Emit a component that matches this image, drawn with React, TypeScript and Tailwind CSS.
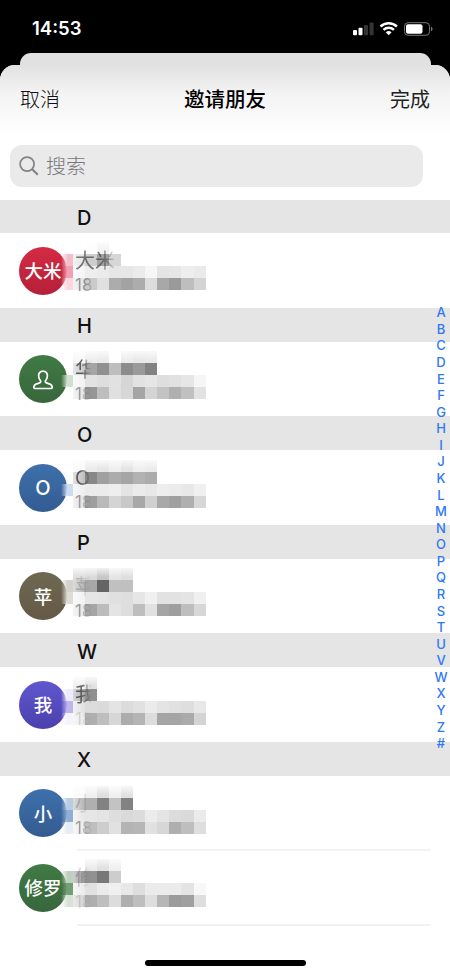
type Tone = number | string;

interface Contact {
  initials: string;
  name: string;
  color: string;
  top: string;
  nameMask: string;
  phoneMask: string;
  cells: Tone[][];
}

const _ = 0;

const fadeLong = "text-[#333333]/65 [mask-image:linear-gradient(to_right,black_24px,transparent_44px)]";
const fadeShort = "text-[#333333]/75 [mask-image:linear-gradient(to_right,black_6px,transparent_17px)]";
const fadeFaint = "text-[#333333]/25 [mask-image:linear-gradient(to_right,black_3px,transparent_16px)]";

const phoneClear = "text-[#777777]/75 [mask-image:linear-gradient(to_right,black_10px,transparent_22px)]";
const phoneShort = "text-[#777777]/70 [mask-image:linear-gradient(to_right,black_5px,transparent_18px)]";
const phoneFaint = "text-[#777777]/25 [mask-image:linear-gradient(to_right,black_5px,transparent_18px)]";

const red = "bg-linear-to-b from-[#d52b44] to-[#b51f38]";
const green = "bg-linear-to-b from-[#407b45] to-[#38663c]";
const blue = "bg-linear-to-b from-[#3e70ab] to-[#335c91]";
const brown = "bg-linear-to-b from-[#6e6852] to-[#655945]";
const violet = "bg-linear-to-b from-[#6057cf] to-[#4b40ad]";

const sections: { letter: string; contacts: Contact[] }[] = [
  {
    letter: "D",
    contacts: [
      {
        initials: "大米", name: "大米", color: red, top: "top-[8.6px]", nameMask: fadeLong, phoneMask: phoneClear,
        cells: [
          [_, _, 252, 242, _],
          ["245,190,205", 226, 206, 160, 214],
          ["242,160,180", 245, 238, 235, 230, 230, 235, 246, 228, 230, 238, 234],
          ["250,215,224", 228, 202, 224, 172, 163, 172, 220, 168, 154, 190, 212],
        ],
      },
    ],
  },
  {
    letter: "H",
    contacts: [
      {
        initials: "", name: "华", color: green, top: "top-[9.4px]", nameMask: fadeShort, phoneMask: phoneShort,
        cells: [
          [_, 248, 238, 235, _, 236, 232, 234],
          [_, 200, 165, 145, 190, 140, 154, 130],
          ["208,224,208", 242, 226, 222, 225, 214, 226, 230, 222, 225, 230, 246],
          [_, 228, 150, 190, 224, 215, 165, 212, 195, 176, 192, 226],
        ],
      },
    ],
  },
  {
    letter: "O",
    contacts: [
      {
        initials: "O", name: "O", color: blue, top: "top-[9.6px]", nameMask: fadeShort, phoneMask: phoneShort,
        cells: [
          [_, 250, 235, 230, 238, 228, 238, 235],
          [_, 190, 135, 160, 172, 165, 178, 172],
          ["205,220,240", 238, 235, 235, 238, 228, 235, 232, 238, 236, 232, 240],
          [_, 225, 158, 185, 212, 200, 168, 208, 168, 160, 175, 215],
        ],
      },
    ],
  },
  {
    letter: "P",
    contacts: [
      {
        initials: "苹", name: "苹", color: brown, top: "top-[9.7px]", nameMask: fadeFaint, phoneMask: phoneShort,
        cells: [
          [_, 222, 218, 198, 228, 222],
          ["212,210,204", 180, 168, 100, 192, 192],
          ["222,220,212", 242, 230, 228, 224, 222, 230, 240, 226, 226, 228, 240],
          [_, 230, 165, 188, 228, 222, 190, 225, 165, 158, 190, 215],
        ],
      },
    ],
  },
  {
    letter: "W",
    contacts: [
      {
        initials: "我", name: "我", color: violet, top: "top-[9.9px]", nameMask: fadeShort, phoneMask: phoneFaint,
        cells: [
          [_, 240, 225],
          ["238,236,252", 170, 145],
          ["190,180,240", 225, 220, 218, 228, 220, 225, 235, 228, 225, 222, 232],
          ["245,244,252", 235, 175, 190, 215, 172, 180, 220, 165, 165, 170, 212],
        ],
      },
    ],
  },
  {
    letter: "X",
    contacts: [
      {
        initials: "小", name: "小", color: blue, top: "top-[10.2px]", nameMask: fadeFaint, phoneMask: phoneShort,
        cells: [
          [_, 250, 240, 222, 240, 225],
          ["185,204,228", 180, 175, 130, 195, 130],
          ["145,175,212", 230, 230, 228, 222, 218, 220, 235, 228, 220, 218, 235],
          ["230,236,244", 235, 190, 205, 225, 180, 182, 225, 215, 175, 190, 222],
        ],
      },
      {
        initials: "修罗", name: "修", color: green, top: "top-[8.7px]", nameMask: fadeFaint, phoneMask: phoneFaint,
        cells: [
          [_, _, 235, 225, 240],
          ["190,208,190", 150, 145, 120, 205],
          ["115,158,117", 235, 225, 235, 240, 232, 222, 235, 235, 235, 228, 248],
          ["215,226,215", 210, 175, 190, 220, 175, 190, 222, 182, 155, 160, 222],
        ],
      },
    ],
  },
];

function cellBackground(tone: Tone, row: number, col: number) {
  if (tone === 0) return "transparent";
  const rgb = typeof tone === "string" ? tone : `${tone},${tone},${tone}`;
  if (row === 0) return `linear-gradient(to bottom, rgba(${rgb},0.25), rgb(${rgb}) 75%)`;
  if (col === 0) return `linear-gradient(to right, rgba(${rgb},0), rgb(${rgb}) 55%)`;
  if (col === 1) return `linear-gradient(to right, rgba(${rgb},0.45), rgb(${rgb}))`;
  return `rgb(${rgb})`;
}

function Mosaic({ cells, top }: { cells: Tone[][]; top: string }) {
  return (
    <div className={`absolute left-[61px] flex flex-col ${top}`}>
      {cells.map((row, r) => (
        <div key={r} className="flex h-[12px]">
          {row.map((tone, c) => (
            <span key={c} className="w-[12.05px]" style={{ background: cellBackground(tone, r, c) }} />
          ))}
        </div>
      ))}
    </div>
  );
}

function PersonIcon() {
  return (
    <svg className="mt-[1px] h-[20px] w-[20px]" viewBox="0 0 20 20" fill="none" stroke="white" strokeWidth="1.7" strokeLinejoin="round">
      <path d="M10 1.1C7.3 1.1 5.6 3 5.6 5.6c0 2.1.6 3.6 1.6 4.8.8 1 .6 2.100-.6 2.500l-3.600 1.200C1.400 14.700.8 15.900.8 17.200c0 .8.5 1.300 1.300 1.300h15.800c.8 0 1.300-.5 1.300-1.300 0-1.300-.6-2.500-2.200-3.100l-3.600-1.200c-1.200-.4-1.400-1.500-.6-2.500 1-1.200 1.600-2.700 1.600-4.800C14.400 3 12.700 1.100 10 1.100Z" />
    </svg>
  );
}

function ContactRow({ contact, divided }: { contact: Contact; divided: boolean }) {
  return (
    <div className="relative flex h-[74.8px] items-center pl-[19px]">
      <div className={`flex size-[48px] shrink-0 items-center justify-center rounded-full text-[18.5px] text-white ${contact.color}`}>
        {contact.initials ? (
          <span className={contact.initials === "O" ? "pt-[1px] text-[20px] font-medium" : "pt-[3px] font-medium"}>{contact.initials}</span>
        ) : (
          <PersonIcon />
        )}
      </div>
      <Mosaic cells={contact.cells} top={contact.top} />
      <div className="relative ml-[8px] flex flex-col pt-[1px]">
        <span className={`text-[20px] leading-[28px] whitespace-nowrap ${contact.nameMask}`}>{contact.name}</span>
        <span className={`text-[17px] leading-[20px] ${contact.phoneMask}`}>18</span>
      </div>
      {divided && <div className="absolute right-[19px] bottom-[-1px] left-[77px] h-[2px] bg-[#f2f2f2]" />}
    </div>
  );
}

function StatusIcons() {
  return (
    <svg className="mt-[1px] h-[16px] w-[82px]" viewBox="0 0 82 16">
      <rect x="1" y="9" width="4" height="5.3" rx="1" fill="white" />
      <rect x="6.5" y="6.8" width="4" height="7.5" rx="1" fill="white" />
      <rect x="12" y="4" width="4" height="10.3" rx="1" fill="#343434" />
      <rect x="17.6" y="1.5" width="4" height="12.8" rx="1" fill="#343434" />
      <g fill="none" stroke="white" strokeWidth="2.4">
        <path d="M28.5 5.5a12 12 0 0 1 16.4 0" />
        <path d="M31.5 8.9a7.4 7.4 0 0 1 10.4 0" />
      </g>
      <path d="M33.8 11.2a4.300 4.300 0 0 1 5.800 0l-2.900 3Z" fill="white" />
      <rect x="52.500" y="1.700" width="25" height="12.600" rx="3.600" fill="none" stroke="#777777" />
      <rect x="54" y="3.300" width="16.500" height="9.400" rx="2" fill="white" />
      <path d="M79 5.800c2 .6 2 3.900 0 4.500Z" fill="#777777" />
    </svg>
  );
}

export default function App() {
  return (
    <div className="relative flex h-[975px] w-[450px] flex-col overflow-hidden bg-black font-['Inter','Noto_Sans_CJK_SC',sans-serif]">
      <header className="flex h-[53px] shrink-0 items-center justify-between pt-[3px] pr-[16px] pl-[32px]">
        <span className="pt-[1px] text-[18.5px] font-semibold text-white">14:53</span>
        <StatusIcons />
      </header>
      <div className="mx-[19.5px] h-[12px] shrink-0 rounded-t-[11px] bg-[#e1e1e1]" />
      <main className="relative flex flex-1 flex-col bg-black">
        <div className="absolute top-0 right-[19px] left-[19px] h-[12px] bg-[#e1e1e1]" />
        <div className="relative flex flex-1 flex-col rounded-t-[15px] bg-white">
          <nav className="flex h-[79.5px] shrink-0 rounded-t-[15px] bg-linear-to-b from-[#e1e1e1] via-[#f3f3f3] via-35% to-white to-90% px-[20px] text-[20px]">
            <div className="flex h-[70px] flex-1 items-center justify-between">
              <button className="flex-1 text-left font-light text-[#111111]">取消</button>
              <h1 className="text-[20.5px] font-medium text-black">邀请朋友</h1>
              <button className="flex-1 text-right text-[#222222]">完成</button>
            </div>
          </nav>
          <div className="mr-[27.5px] mb-[12.5px] ml-[10px] flex h-[42.5px] shrink-0 items-center rounded-[12px] bg-[#eaeaea] pl-[9px]">
            <svg className="size-[20px]" viewBox="0 0 20 20" fill="none" stroke="#838385" strokeWidth="1.7">
              <circle cx="8.1" cy="8.1" r="7" />
              <path d="m13.2 13.2 5.6 5.6" strokeWidth="2.2" />
            </svg>
            <span className="ml-[7px] pt-[3px] text-[20px] font-light text-[#77777b]">搜索</span>
          </div>
          {sections.map((section) => (
            <section key={section.letter} className="shrink-0">
              <h2 className="flex h-[33.7px] items-center bg-[#e5e5e5] pt-[3px] pl-[77px] text-[20px] font-medium text-[#111111]">
                {section.letter}
              </h2>
              {section.contacts.map((contact) => (
                <ContactRow key={contact.initials} contact={contact} divided={section.letter === "X"} />
              ))}
            </section>
          ))}
        </div>
      </main>
      <aside className="absolute top-[304.2px] right-0 flex w-[18px] flex-col items-center text-[13px] font-medium text-[#2f79f2]">
        {[..."ABCDEFGHIJKLMNOPQRSTUVWXYZ#"].map((letter) => (
          <span key={letter} className="h-[16.58px] leading-[16.58px]">{letter}</span>
        ))}
      </aside>
      <div className="absolute bottom-[9px] left-[145px] h-[6.5px] w-[161px] rounded-full bg-black" />
    </div>
  );
}
